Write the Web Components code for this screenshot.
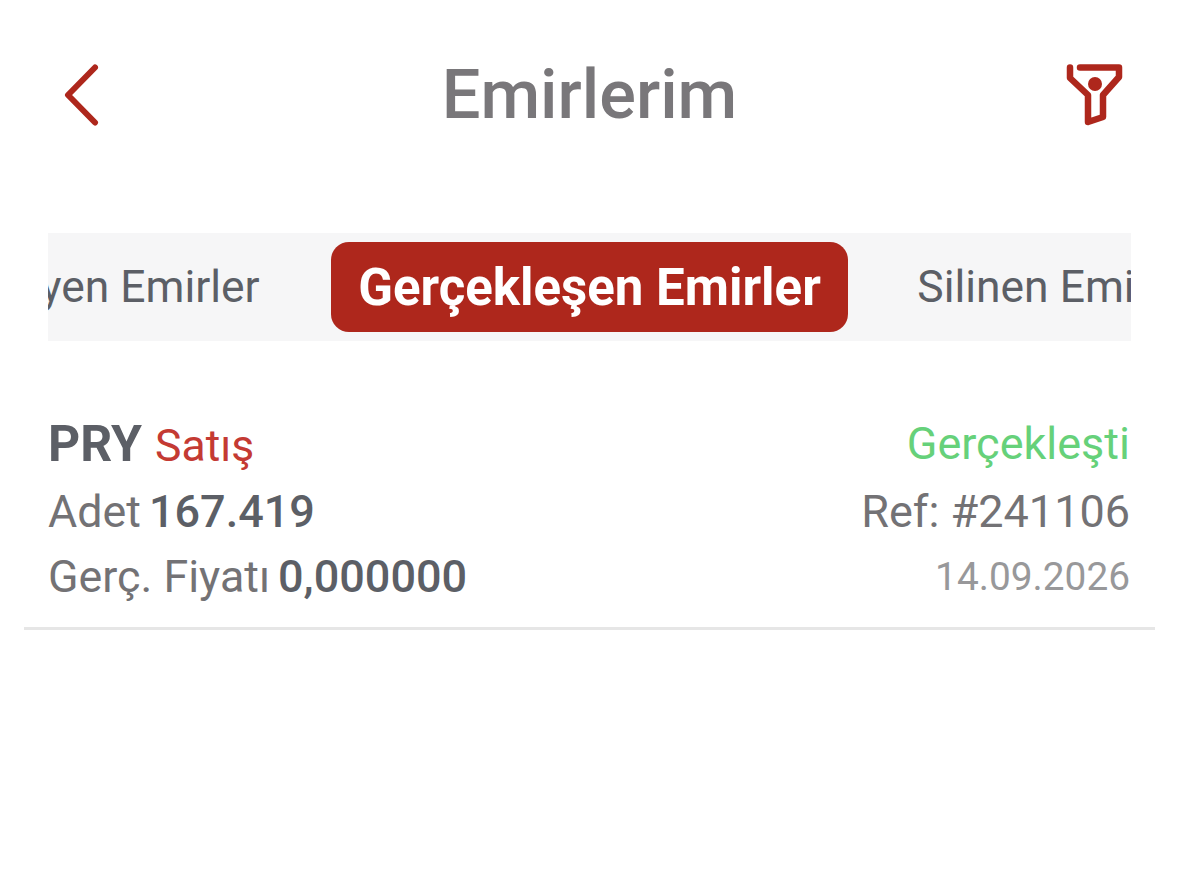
<!DOCTYPE html>
<html lang="tr">
<head>
<meta charset="utf-8">
<title>Emirlerim</title>
<style>
    html, body { margin: 0; background: #fff; }
    body { font-family: Roboto, "Liberation Sans", sans-serif; width: 1179px; height: 880px; overflow: hidden; }
</style>
</head>
<body>
<orders-page>
    <orders-header title-text="Emirlerim"></orders-header>
    <orders-tabs></orders-tabs>
    <order-row></order-row>
</orders-page>

<script>
class OrdersPage extends HTMLElement{
    constructor(){
        super();
        this.attachShadow({mode: 'open'})
        this.shadowRoot.innerHTML=`
            <style>
                :host { display: block; padding-top: 60px; }
            </style>
            <slot></slot>
        `
    }
}

class OrdersHeader extends HTMLElement{
    constructor(){
        super();
        this.attachShadow({mode: 'open'})
        this.shadowRoot.innerHTML=`
            <style>
                :host {
                    display: grid;
                    grid-template-columns: 1fr auto 1fr;
                    align-items: center;
                    height: 70px;
                    padding: 0 55px;
                }
                h1 {
                    margin: 0;
                    font-size: 68.5px;
                    font-weight: 500;
                    color: #79777a;
                    line-height: 70px;
                }
                svg { display: block; }
                .back { margin-left: 9px; }
                .filter { justify-self: end; }
            </style>
            <svg class="back" width="38" height="64" viewBox="0 0 38 64" fill="none" stroke="#ae271c" stroke-width="6" stroke-linecap="round" stroke-linejoin="round">
                <path d="M31 4.500 L4 32 L31 59.500"/>
            </svg>
            <h1>${this.getAttribute('title-text')}</h1>
            <svg class="filter" width="60" height="62" viewBox="0 0 60 62" fill="none" stroke="#ae271c" stroke-width="6.500" stroke-linecap="round" stroke-linejoin="round">
                <path d="M6 3.500 V14 L24 31 V58 L39 53 V31 L55 13 V3.500 H16"/>
                <circle cx="31" cy="20" r="7" fill="#ae271c" stroke="none"/>
            </svg>
        `
    }
}

class OrdersTabs extends HTMLElement{
    constructor(){
        super();
        this.attachShadow({mode: 'open'})
        this.shadowRoot.innerHTML=`
            <style>
                :host {
                    display: grid;
                    grid-template-columns: minmax(0, 1fr) auto minmax(0, 1fr);
                    align-items: center;
                    column-gap: 69px;
                    height: 108px;
                    margin: 103px 48px 0;
                    background: #f6f6f7;
                    overflow: hidden;
                    white-space: nowrap;
                    font-size: 44.400px;
                    color: #5c5f66;
                }
                .before { justify-self: end; margin-right: 2px; }
                .active {
                    display: flex;
                    align-items: center;
                    height: 90px;
                    padding: 0 27.500px;
                    border-radius: 18px;
                    background: #ae271c;
                    color: #fff;
                    font-size: 51px;
                    font-weight: 700;
                }
            </style>
            <span class="before">Bekleyen Emirler</span>
            <span class="active">Gerçekleşen Emirler</span>
            <span>Silinen Emirler</span>
        `
    }
}

class OrderRow extends HTMLElement{
    constructor(){
        super();
        this.attachShadow({mode: 'open'})
        this.shadowRoot.innerHTML=`
            <style>
                :host {
                    display: grid;
                    grid-template-columns: 1fr auto;
                    grid-template-rows: 68px 65px 65px;
                    margin: 70px 24px 0;
                    padding: 0 25px 18px 24px;
                    border-bottom: 3px solid #e6e6e6;
                    color: #737275;
                    font-size: 45px;
                }
                div { display: flex; align-items: baseline; line-height: 66px; white-space: nowrap; }
                .pair { gap: 8px; font-size: 44.800px; }
                b { font-size: 45px; font-weight: 500; color: #5c5f66; }
                .first { gap: 13px; }
                .code { font-size: 50px; font-weight: 700; color: #5c5f66; }
                .sell { color: #c43a33; font-size: 44.500px; }
                .done { color: #66d17a; }
                .right { justify-content: flex-end; }
                .date { color: #98989a; font-size: 38.800px; }
            </style>
            <div class="first"><span class="code">PRY</span><span class="sell">Satış</span></div>
            <div class="right done">Gerçekleşti</div>
            <div class="pair"><span>Adet</span><b>167.419</b></div>
            <div class="right">Ref: #241106</div>
            <div class="pair"><span>Gerç. Fiyatı</span><b>0,000000</b></div>
            <div class="right date">14.09.2026</div>
        `
    }
}

customElements.define('orders-page', OrdersPage);
customElements.define('orders-header', OrdersHeader);
customElements.define('orders-tabs', OrdersTabs);
customElements.define('order-row', OrderRow);
</script>
</body>
</html>
